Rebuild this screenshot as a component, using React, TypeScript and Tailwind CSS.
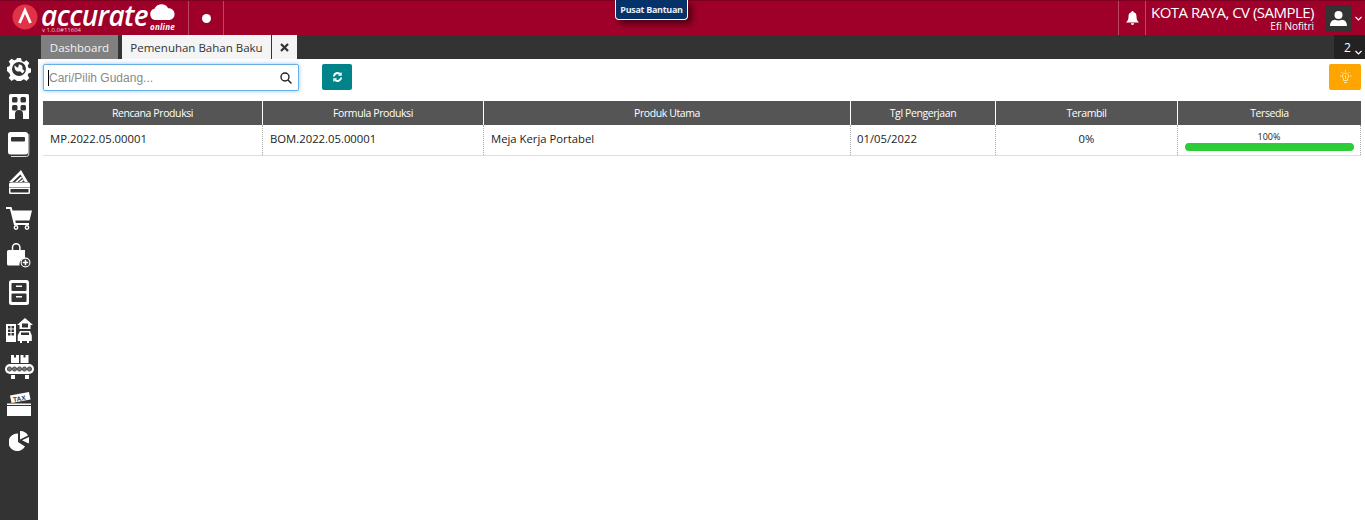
import React from "react";

const font = { fontFamily: '"Open Sans", "Noto Sans", sans-serif' };

function SideIcon({ children, cls }: { children: React.ReactNode; cls: string }) {
  return <div className={`flex items-center justify-center w-[38px] ${cls}`}>{children}</div>;
}

const Cog = () => (
  <svg width="24" height="24" viewBox="0 0 24 24" fill="#fff">
    <path fillRule="evenodd" d="M10 1h4l.7 3 2.200.9 2.600-1.600 2.800 2.800-1.600 2.600.9 2.200 2.400.7v4l-2.400.7-.9 2.200 1.600 2.600-2.800 2.800-2.600-1.600-2.200.9-.7 2.800h-4l-.7-2.800-2.200-.9-2.600 1.600-2.800-2.800 1.600-2.600-.9-2.200L0 14v-4l2.400-.7.9-2.200-1.600-2.600 2.800-2.800 2.600 1.600 2.200-.9zM12 5a7 7 0 1 0 0 14 7 7 0 0 0 0-14z" />
    <path d="M7.500 8.300l2.600 2.300 1.200-.3.500-2.800c2-.4 3.900 1 3.800 3.100l-.3 1.200 2.200 2.200-2 2.500-2.500-2.200-1.300.2c-2.600.3-4.400-1.800-4.200-6.200z" />
  </svg>
);
const Building = () => (
  <svg width="20" height="25" viewBox="0 0 20 25">
    <path fill="#fff" d="M1.500 0h17A1.500 1.500 0 0 1 20 1.500V25h-6v-5a4 4 0 0 0-8 0v5H0V1.500A1.500 1.500 0 0 1 1.500 0z" />
    <rect x="3" y="3" width="5.500" height="5.500" rx="1.500" fill="#333" />
    <rect x="11.500" y="3" width="5.500" height="5.500" rx="1.500" fill="#333" />
    <rect x="3" y="11" width="5.500" height="5.500" rx="1.500" fill="#333" />
    <rect x="11.500" y="11" width="5.500" height="5.500" rx="1.500" fill="#333" />
  </svg>
);
const Book = () => (
  <svg width="22" height="25" viewBox="0 0 22 25">
    <rect x="0" y="0" width="20" height="22.500" rx="2.500" fill="#fff" />
    <path d="M20.800 2v20a2.500 2.500 0 0 1-2.500 2.500H3" fill="none" stroke="#ddd" strokeWidth="1" />
    <rect x="3" y="5" width="14" height="4.500" rx="1" fill="#333" />
  </svg>
);
const Wallet = () => (
  <svg width="21" height="25" viewBox="0 0 21 25">
    <path fill="#fff" d="M0 13 12 1l7 12h-3.200L11.500 5.500 3.500 13z" />
    <path fill="#fff" d="M6 13l6-5.500 1.200 1.300L8.500 13zM10 13l3.800-3 1 1.500L12.500 13z" />
    <path fill="#fff" d="M1.500 13.500h18a1.500 1.500 0 0 1 1.500 1.500v3.500H0V15a1.500 1.500 0 0 1 1.500-1.500z" />
    <path fill="#fff" d="M0 19h21v4.500a1.500 1.500 0 0 1-1.500 1.500h-18A1.500 1.500 0 0 1 0 23.500z" />
    <rect x="1.500" y="20" width="18" height="3.500" fill="#333" />
  </svg>
);
const Cart = () => (
  <svg width="26" height="23" viewBox="0 0 26 23" fill="#fff">
    <path d="M0 0h5.500l1 3.500H26l-2.500 10H9.300l.5 2.500H23v2H8L4 2H0z" />
    <circle cx="10" cy="20.500" r="1.700" fill="#333" stroke="#fff" strokeWidth="1.400" />
    <circle cx="21" cy="20.500" r="1.700" fill="#333" stroke="#fff" strokeWidth="1.400" />
  </svg>
);
const Bag = () => (
  <svg width="24" height="25" viewBox="0 0 24 25">
    <path fill="#fff" d="M1.500 7H18v8a6.500 6.500 0 0 0-5.500 7.500h-11A1.500 1.500 0 0 1 0 21V8.500A1.500 1.500 0 0 1 1.500 7z" />
    <path fill="none" stroke="#fff" strokeWidth="1.500" d="M5.500 7V4.500a3.700 3.700 0 0 1 7.400 0V7" />
    <circle cx="18.500" cy="19.500" r="4.400" fill="#333" stroke="#fff" strokeWidth="1.100" />
    <path stroke="#fff" strokeWidth="1.600" d="M15.800 19.500h5.400M18.500 16.800v5.400" />
  </svg>
);
const Cabinet = () => (
  <svg width="20" height="25" viewBox="0 0 20 25">
    <rect width="20" height="25" rx="2.500" fill="#fff" />
    <rect x="2.500" y="3" width="15" height="8" rx="1" fill="#333" />
    <rect x="2.500" y="13.500" width="15" height="8.500" rx="1" fill="#333" />
    <rect x="7" y="5.500" width="6" height="1.500" fill="#fff" />
    <rect x="7" y="16" width="6" height="1.500" fill="#fff" />
  </svg>
);
const Assets = () => (
  <svg width="27" height="25" viewBox="0 0 27 25" fill="#fff">
    <path fillRule="evenodd" d="M0 6h10v18H0zM2 8v2.500h2.500V8zM5.500 8v2.500H8V8zM2 11.500V14h2.500v-2.500zM5.500 11.500V14H8v-2.500zM2 15v2.500h2.500V15zM5.500 15v2.500H8V15z" />
    <path d="M19 0l8 7h-2.500v4h-11V7H11z" />
    <path fill="#333" d="M16 5.500h6V9.500h-6z" />
    <path d="M14 13h10l1.800 4.500V23H23v2h-2v-2h-5v2h-2v-2h-2.300v-5.500z" />
    <rect x="15" y="14.500" width="8" height="2.500" fill="#333" />
  </svg>
);
const Conveyor = () => (
  <svg width="29" height="25" viewBox="0 0 29 25" fill="#fff">
    <rect x="6" y="0" width="8" height="8" />
    <rect x="15.500" y="0" width="8" height="8" />
    <rect x="9" y="0" width="2" height="2.500" fill="#333" />
    <rect x="18.500" y="0" width="2" height="2.500" fill="#333" />
    <rect x="0" y="9" width="29" height="10" rx="5" />
    {[4.500, 9.500, 14.500, 19.500, 24.500].map((x) => (
      <circle key={x} cx={x} cy="14" r="2.100" fill="#777" stroke="#333" strokeWidth="0.800" />
    ))}
    <rect x="6" y="20" width="4" height="4" />
    <rect x="20" y="20" width="4" height="4" />
  </svg>
);
const Tax = () => (
  <svg width="24" height="24" viewBox="0 0 24 24">
    <path fill="#fff" d="M3 3.500 22 0l1.500 7.500L4.500 11z" />
    <text x="6" y="9" fontSize="6.500" fontWeight="700" fill="#333" transform="rotate(-10 12 6)" fontFamily="Liberation Sans, sans-serif">TAX</text>
    <rect x="0" y="11.500" width="24" height="1.500" fill="#fff" />
    <rect x="0" y="14" width="24" height="10" fill="#fff" />
  </svg>
);
const Pie = () => (
  <svg width="20" height="20" viewBox="0 0 20 20" fill="#fff">
    <path d="M9 2.500v8.500l7 4.500A8.800 8.800 0 1 1 9 2.500z" />
    <path d="M11 0a9 9 0 0 1 8 4.500L11 8.500z" />
    <path d="M20 6a9 9 0 0 1-.5 6.500l-6.500-3.300z" />
  </svg>
);

const columns = [
  { title: "Rencana Produksi", w: "w-[220px]" },
  { title: "Formula Produksi", w: "w-[221px]" },
  { title: "Produk Utama", w: "w-[367px]" },
  { title: "Tgl Pengerjaan", w: "w-[145px]" },
  { title: "Terambil", w: "w-[182px]" },
  { title: "Tersedia", w: "w-[183px]" },
];

export default function App() {
  return (
    <div className="w-[1365px] h-[520px] overflow-hidden bg-white flex flex-col" style={font}>
      {/* Top bar */}
      <header className="relative h-[35px] shrink-0 bg-[#9f0029] border-t border-[#7d0020] flex items-stretch text-white">
        <div className="w-[188px] flex items-center pl-[12px] relative shrink-0">
          <svg width="26" height="26" viewBox="0 0 26 26" className="shrink-0 -mt-[3px]">
            <circle cx="13" cy="13" r="12.500" fill="#e03348" />
            <path d="M7.500 19 13 6.500 18.500 19" fill="none" stroke="#fff" strokeWidth="2.800" />
          </svg>
          <span className="ml-[3px] -mt-[7px] text-[28px] leading-[28px] italic font-semibold tracking-[-0.6px] text-white whitespace-nowrap">accurate</span>
          <div className="absolute left-[149px] top-[2px] flex flex-col items-center">
            <svg width="27" height="17" viewBox="0 0 28 18" fill="#fff">
              <path d="M7 18a6 6 0 0 1-1.500-11.800A8 8 0 0 1 20 5.500 6.300 6.300 0 0 1 21.500 18z" />
            </svg>
            <span className="text-[8px] leading-[8px] mt-[3px] italic font-bold tracking-[0.2px]">online</span>
          </div>
          <span className="absolute left-[42px] top-[26px] text-[6px] leading-[6px] text-[#f3c7d0] whitespace-nowrap">v 1.0.0#11604</span>
        </div>
        <div className="w-[36px] flex items-center justify-center border-l border-r border-[#b8475f]">
          <span className="block w-[9px] h-[9px] rounded-full bg-white" />
        </div>
        <div className="flex-1" />
        <div className="w-[28px] flex items-center justify-center border-l border-r border-[#b8475f]">
          <svg width="13" height="14" viewBox="0 0 13 14" fill="#fff">
            <path d="M6.500 0a1 1 0 0 1 1 1.100C9.600 1.700 10.500 3.300 10.500 5.500c0 3 .8 4.500 2.500 6H0c1.700-1.500 2.500-3 2.500-6 0-2.200.9-3.800 3-4.400a1 1 0 0 1 1-1.100zM4.800 12.300h3.400a1.700 1.700 0 0 1-3.400 0z" />
          </svg>
        </div>
        <div className="w-[179px] pl-[5px] pt-[2px] pr-[11px] flex flex-col items-start">
          <span className="text-[15px] leading-[18px] whitespace-nowrap tracking-[-0.52px]">KOTA RAYA, CV (SAMPLE)</span>
          <span className="self-end text-[10px] leading-[10px] whitespace-nowrap">Efi Nofitri</span>
        </div>
        <div className="w-[27px] h-[26px] mt-[4px] bg-[#333] flex items-center justify-center shrink-0">
          <svg width="17" height="15" viewBox="0 0 17 15" fill="#fff">
            <circle cx="8.500" cy="4" r="4" />
            <path d="M0 15c0-4 2-6 5-6.300 2 1 5 1 7 0 3 .3 5 2.300 5 6.300z" />
          </svg>
        </div>
        <div className="w-[13px] flex items-center justify-center">
          <svg width="7" height="5" viewBox="0 0 7 5" fill="none" stroke="#fff" strokeWidth="1.200"><path d="M.5 1l3 3 3-3" /></svg>
        </div>
        <div className="absolute left-[615px] -top-[1px] h-[20px] w-[73px] bg-[#06326a] border border-t-0 border-white rounded-b-[4px] shadow-[4px_4px_6px_rgba(0,0,0,0.5)] flex items-center justify-center text-[9px] font-bold tracking-[-0.3px] whitespace-nowrap text-[#e8eef5]">
          Pusat Bantuan
        </div>
      </header>

      {/* Tab bar */}
      <div className="h-[24px] shrink-0 bg-[#333] flex items-end pl-[41px]">
        <div className="w-[77px] h-[24px] pt-[1px] bg-[#808080] text-[#f3f3f3] text-[11.500px] flex items-center justify-center">Dashboard</div>
        <div className="ml-[4px] h-[24px] w-[149px] pt-[1px] bg-[#f4f4f4] text-[#333] text-[11.500px] flex items-center justify-center whitespace-nowrap">Pemenuhan Bahan Baku</div>
        <div className="ml-[1px] w-[25px] h-[24px] pt-[1px] bg-[#f4f4f4] flex items-center justify-center">
          <svg width="9" height="9" viewBox="0 0 9 9" stroke="#333" strokeWidth="2.200"><path d="M1 1l7 7M8 1L1 8" /></svg>
        </div>
        <div className="flex-1" />
        <div className="w-[31px] h-[24px] pt-[1px] bg-[#222] text-white text-[12px] flex items-center pl-[10px] gap-[4px]">
          <span>2</span>
          <svg width="7" height="5" viewBox="0 0 7 5" fill="none" stroke="#fff" strokeWidth="1.200" className="mt-[9px]"><path d="M.5 1l3 3 3-3" /></svg>
        </div>
      </div>

      <div className="flex-1 flex min-h-0">
        {/* Sidebar */}
        <aside className="w-[38px] shrink-0 bg-[#333] flex flex-col items-center">
          <SideIcon cls="h-[22px] -mt-[1px]"><Cog /></SideIcon>
          <SideIcon cls="h-[25px] mt-[14px]"><Building /></SideIcon>
          <SideIcon cls="h-[25px] mt-[13px]"><Book /></SideIcon>
          <SideIcon cls="h-[25px] mt-[12px]"><Wallet /></SideIcon>
          <SideIcon cls="h-[23px] mt-[13px]"><Cart /></SideIcon>
          <SideIcon cls="h-[25px] mt-[13px]"><Bag /></SideIcon>
          <SideIcon cls="h-[25px] mt-[12px]"><Cabinet /></SideIcon>
          <SideIcon cls="h-[25px] mt-[13px]"><Assets /></SideIcon>
          <SideIcon cls="h-[25px] mt-[12px]"><Conveyor /></SideIcon>
          <SideIcon cls="h-[24px] mt-[12px]"><Tax /></SideIcon>
          <SideIcon cls="h-[20px] mt-[15px]"><Pie /></SideIcon>
        </aside>

        {/* Main */}
        <main className="flex-1 min-w-0 pl-[5px] pr-[4px]">
          <div className="h-[42px] flex items-start pt-[5px]">
            <div className="w-[256px] h-[27px] bg-white border border-[#66afe9] rounded-[2px] shadow-[0_0_4px_rgba(102,175,233,0.7)] flex items-center pl-[4px] pr-[6px]">
              <span className="w-[1px] h-[16px] bg-black" />
              <span className="flex-1 text-[12px] text-[#8a8a8a] whitespace-nowrap" style={{ fontFamily: '"Liberation Sans", sans-serif' }}>Cari/Pilih Gudang...</span>
              <svg width="12" height="12" viewBox="0 0 12 12" fill="none" stroke="#222" strokeWidth="1.400"><circle cx="5" cy="5" r="4" /><path d="M8 8l3.500 3.500" /></svg>
            </div>
            <div className="ml-[23px] w-[30px] h-[26px] bg-[#008489] rounded-[2px] flex items-center justify-center">
              <svg width="9" height="10" viewBox="0 0 10 11" fill="none" stroke="#fff" strokeWidth="2.200">
                <path d="M1 5a4 4 0 0 1 7-2.500" /><path d="M9 6a4 4 0 0 1-7 2.500" />
                <path d="M9 .5v3H6M1 10.500v-3h3" strokeWidth="1.400" />
              </svg>
            </div>
            <div className="flex-1" />
            <div className="w-[32px] h-[26px] bg-[#ffa500] rounded-[2px] flex items-center justify-center">
              <svg width="13" height="14" viewBox="0 0 13 14" fill="none" stroke="#ffe6a8" strokeWidth="1">
                <path d="M6.500 3a3.200 3.200 0 0 0-2 5.600V10.500h4V8.600a3.200 3.200 0 0 0-2-5.600zM5 12.500h3M6.500 5v4M6.500 0v1.500M1 6h1.500M11 6h1.500M2.500 2l1 1M10.500 2l-1 1" />
              </svg>
            </div>
          </div>

          {/* Table */}
          <div className="w-[1318px]">
            <div className="flex h-[24px] bg-[#555]">
              {columns.map((c, i) => (
                <div key={c.title} className={`${c.w} shrink-0 pt-[1px] flex items-center justify-center text-[10.500px] tracking-[-0.4px] text-white ${i < 5 ? "border-r border-white" : ""}`}>
                  {c.title}
                </div>
              ))}
            </div>
            <div className="flex h-[31px] border-b border-[#ddd] text-[11.300px] text-[#222]">
              <div className="w-[220px] shrink-0 border-r border-dotted border-[#aaa] flex items-center pl-[7px] pb-[1px]">MP.2022.05.00001</div>
              <div className="w-[221px] shrink-0 border-r border-dotted border-[#aaa] flex items-center pl-[7px] pb-[1px]">BOM.2022.05.00001</div>
              <div className="w-[367px] shrink-0 border-r border-dotted border-[#aaa] flex items-center pl-[7px] pb-[1px]">Meja Kerja Portabel</div>
              <div className="w-[145px] shrink-0 border-r border-dotted border-[#aaa] flex items-center pl-[6px] pb-[1px]">01/05/2022</div>
              <div className="w-[182px] shrink-0 border-r border-dotted border-[#aaa] flex items-center justify-center pb-[1px]">0%</div>
              <div className="w-[183px] shrink-0 border-r border-dotted border-[#aaa] flex flex-col items-center pt-[6px]">
                <span className="text-[9px] leading-[12px]">100%</span>
                <div className="w-[169px] h-[8px] rounded-full bg-[#2ecc36]" />
              </div>
            </div>
          </div>
        </main>
      </div>
    </div>
  );
}
